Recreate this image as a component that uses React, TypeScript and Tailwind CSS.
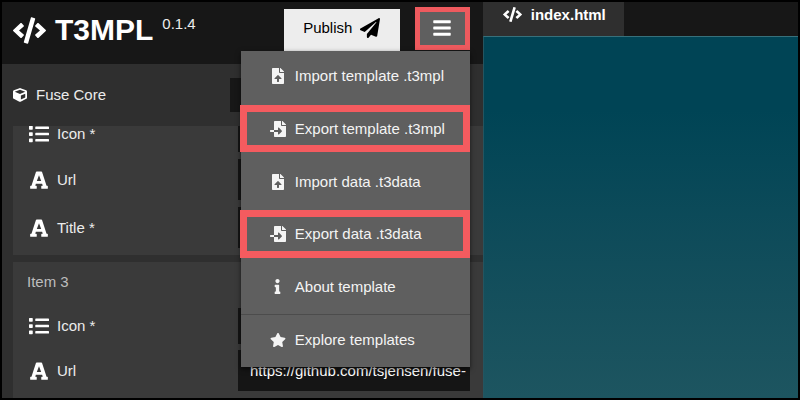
import type { ReactNode } from "react";
import {
  FaBars,
  FaCode,
  FaCube,
  FaFileImport,
  FaFileUpload,
  FaInfo,
  FaList,
  FaPaperPlane,
  FaStar,
} from "react-icons/fa";

function SlabGlyphIcon() {
  return (
    <svg width="18" height="18" viewBox="0 0 18 18" fill="currentColor" aria-hidden="true">
      <path
        fillRule="evenodd"
        d="M6.7.5h4.6a.8.8 0 0 1 .75.5l4.5 13.7h.7a.6.6 0 0 1 .6.6v1.9a.6.6 0 0 1-.6.6h-5.4a.6.6 0 0 1-.6-.6v-1.9a.6.6 0 0 1 .6-.6h.9l-.6-2H5.85l-.6 2h.9a.6.6 0 0 1 .6.6v1.9a.6.6 0 0 1-.6.6H.75a.6.6 0 0 1-.6-.6v-1.9a.6.6 0 0 1 .6-.6h.7L5.95 1a.8.8 0 0 1 .75-.5ZM9 4.2 6.8 10h4.4Z"
      />
    </svg>
  );
}

type FieldProps = {
  id: string;
  label: string;
  kind: "icon" | "text";
  value?: string;
};

function Field({ id, label, kind, value = "" }: FieldProps) {
  return (
    <div className="flex items-center">
      <label htmlFor={id} className="flex w-[225px] shrink-0 items-center gap-2 pl-4">
        <span className="flex w-5 justify-center text-white">
          {kind === "icon" ? <FaList size={20} /> : <SlabGlyphIcon />}
        </span>
        {label}
      </label>
      <input
        id={id}
        type="text"
        defaultValue={value}
        className={
          kind === "icon"
            ? "h-9 min-w-0 flex-1 bg-[#151515] pr-1 pl-3 text-white outline-none"
            : "h-[41px] min-w-0 flex-1 bg-[#151515] pr-1 pl-3 text-white outline-none"
        }
      />
    </div>
  );
}

type MenuItemProps = {
  icon: ReactNode;
  children: ReactNode;
  highlighted?: boolean;
  divided?: boolean;
};

function MenuItem({ icon, children, highlighted, divided }: MenuItemProps) {
  return (
    <li className={divided ? "relative border-t border-[#4c4c4c]" : "relative"}>
      <button type="button" className="flex h-full w-full items-center gap-2 pb-0.5 pl-7 text-left">
        <span className="flex w-[18px] justify-center">{icon}</span>
        {children}
      </button>
      {highlighted && (
        <span className="pointer-events-none absolute top-px right-0 bottom-1 -left-px border-7 border-[#f45b5f]" />
      )}
    </li>
  );
}

export default function App() {
  return (
    <div className="flex h-screen overflow-hidden border-2 border-black bg-[#2f2f2f] font-['Liberation_Sans',Arial,sans-serif] text-[15px] leading-5 text-[#ececec]">
      <section className="relative flex w-[60.4%] shrink-0 flex-col">
        <header className="flex h-[62px] shrink-0 items-start bg-[#171717] pr-[13px]">
          <h1 className="flex items-center gap-[9px] pt-2 pl-[11px] text-[30px] leading-10 font-bold text-white">
            <FaCode size={33} />
            T3MPL
          </h1>
          <span className="pt-3 pl-[9px]">0.1.4</span>
          <div className="ml-auto flex items-start gap-[15px] pt-[5px]">
            <button
              type="button"
              className="mt-0.5 flex h-[42px] w-[116px] items-center justify-center gap-2 bg-[#ededed] pb-1 text-black"
            >
              Publish
              <FaPaperPlane size={20} />
            </button>
            <button
              type="button"
              aria-label="Menu"
              aria-expanded="true"
              className="flex h-[43px] w-[55px] items-center justify-center border-5 border-[#ee5a5e] bg-[#5f5f5f] pb-0.5 text-white"
            >
              <FaBars size={20} />
            </button>
          </div>
        </header>

        <div className="flex h-[62px] shrink-0 items-center pr-[13px]">
          <label htmlFor="section" className="flex w-[228px] shrink-0 items-center gap-[9px] pl-[11px]">
            <FaCube size={14} className="text-white" />
            Fuse Core
          </label>
          <input id="section" type="text" className="h-[34px] min-w-0 flex-1 bg-[#171717] outline-none" />
        </div>

        <div className="flex min-h-0 flex-1 flex-col gap-[7px] overflow-hidden pl-[11px]">
          <div className="-mt-[10px] flex shrink-0 flex-col gap-[7px] bg-[#3a3a3a] pr-[13px] pb-[7px]">
            <Field id="item2-icon" label="Icon *" kind="icon" />
            <Field id="item2-url" label="Url" kind="text" />
            <Field id="item2-title" label="Title *" kind="text" />
          </div>
          <div className="flex flex-1 shrink-0 flex-col gap-[6px] bg-[#3a3a3a] pr-[13px]">
            <h2 className="pt-[10px] pb-[10px] pl-[14px] text-[#bdbdbd]">Item 3</h2>
            <Field id="item3-icon" label="Icon *" kind="icon" />
            <Field
              id="item3-url"
              label="Url"
              kind="text"
              value="https://github.com/tsjensen/fuse-"
            />
          </div>
        </div>

        <ul className="absolute top-[49px] right-[13px] grid h-[316px] w-[229px] grid-rows-6 bg-[#5f5f5f] text-[#f4f4f4] shadow-[0_2px_5px_rgba(0,0,0,0.6)]">
          <MenuItem icon={<FaFileUpload size={16} />}>Import template .t3mpl</MenuItem>
          <MenuItem icon={<FaFileImport size={16} />} highlighted>
            Export template .t3mpl
          </MenuItem>
          <MenuItem icon={<FaFileUpload size={16} />}>Import data .t3data</MenuItem>
          <MenuItem icon={<FaFileImport size={16} />} highlighted>
            Export data .t3data
          </MenuItem>
          <MenuItem icon={<FaInfo size={15} />}>About template</MenuItem>
          <MenuItem icon={<FaStar size={16} />} divided>
            Explore templates
          </MenuItem>
        </ul>
      </section>

      <main className="flex min-w-0 flex-1 flex-col">
        <nav className="flex h-[34px] shrink-0 bg-[#171717]">
          <button
            type="button"
            className="flex w-[141px] items-start gap-[9px] bg-[#2f2f2f] pt-[3px] pl-5 font-bold text-white"
          >
            <FaCode size={19} />
            index.html
          </button>
        </nav>
        <div className="flex-1 border-t border-l border-t-[#37707b] border-l-[#245560] bg-linear-to-b from-[#004455] from-20% to-[#1d5560]" />
      </main>
    </div>
  );
}
